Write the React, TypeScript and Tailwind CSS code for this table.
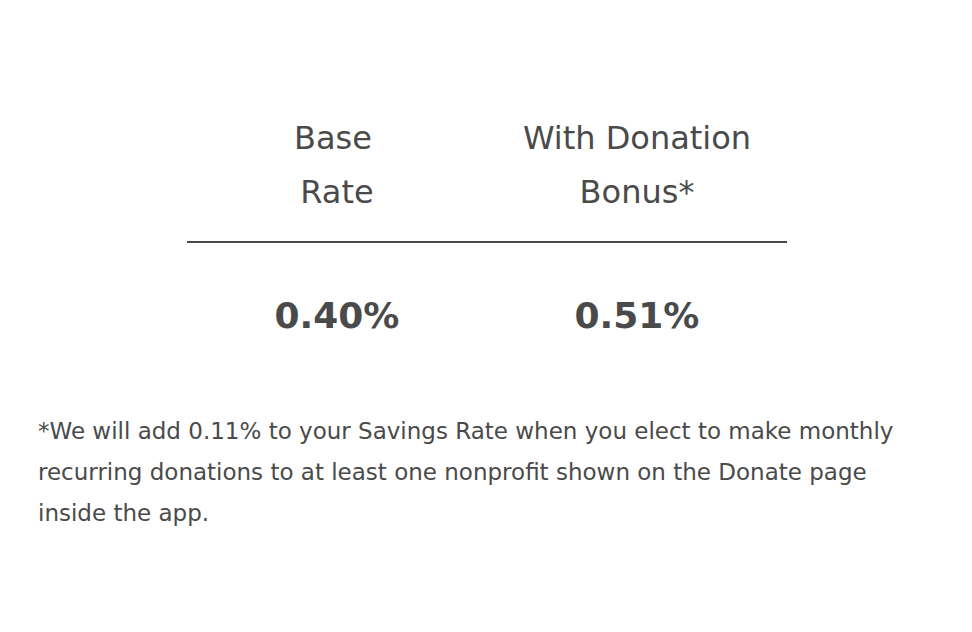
export default function App() {
  return (
    <div className="w-[972px] h-[632px] bg-white text-[#4a4a4a]" style={{ fontFamily: '"DejaVu Sans", sans-serif' }}>
      <div className="pt-[111px] flex flex-col items-center">
        <div className="w-[600px] ml-[2px]">
          <div className="grid grid-cols-2 text-[32px] leading-[54px] text-center">
            <div className="flex flex-col items-center">
              <span className="mr-[8px]">Base</span>
              <span>Rate</span>
            </div>
            <div className="flex flex-col items-center">
              <span>With Donation</span>
              <span>Bonus*</span>
            </div>
          </div>
          <div className="mt-[22px] h-[2px] bg-[#4a4a4a]" />
          <div className="mt-[43px] grid grid-cols-2 text-[36px] leading-[60px] font-bold text-center">
            <div>0.40%</div>
            <div>0.51%</div>
          </div>
        </div>
      </div>
      <p className="mt-[65px] pl-[38px] pr-[60px] text-[23px] leading-[41px]">
        *We will add 0.11% to your Savings Rate when you elect to make monthly recurring donations to at least one nonprofit shown on the Donate page inside the app.
      </p>
    </div>
  );
}
